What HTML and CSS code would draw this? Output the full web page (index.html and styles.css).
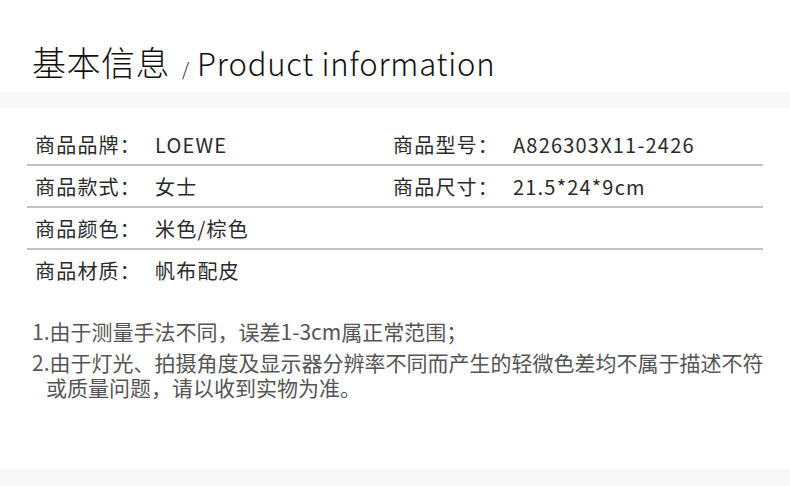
FILE: index.html
```html
<!DOCTYPE html>
<html lang="zh-CN">
<head>
<meta charset="utf-8">
<title>基本信息 / Product information</title>
<link rel="stylesheet" href="styles.css">
</head>
<body>
<header class="head">
  <h1 class="title"><span class="title-cn">基本信息</span><span class="title-slash">/</span><span class="title-en">Product information</span></h1>
</header>
<div class="band"></div>
<section class="table">
  <div class="row">
    <span class="label">商品品牌：</span><span class="value">LOEWE</span>
    <span class="label">商品型号：</span><span class="value">A826303X11-2426</span>
  </div>
  <div class="row">
    <span class="label">商品款式：</span><span class="value">女士</span>
    <span class="label">商品尺寸：</span><span class="value">21.5*24*9cm</span>
  </div>
  <div class="row">
    <span class="label">商品颜色：</span><span class="value">米色/棕色</span>
    <span class="label"></span><span class="value"></span>
  </div>
  <div class="row row-last">
    <span class="label">商品材质：</span><span class="value">帆布配皮</span>
    <span class="label"></span><span class="value"></span>
  </div>
</section>
<section class="notes">
  <p class="note">1.由于测量手法不同，误差1-3cm属正常范围；</p>
  <p class="note">2.由于灯光、拍摄角度及显示器分辨率不同而产生的轻微色差均不属于描述不符或质量问题，请以收到实物为准。</p>
</section>
<div class="band band-bottom"></div>
</body>
</html>
```
FILE: styles.css
```css
html, body {
  margin: 0;
  padding: 0;
  background: #ffffff;
}
body {
  width: 790px;
  height: 486px;
  overflow: hidden;
  font-family: "Noto Sans CJK SC", "Noto Sans", sans-serif;
  color: #333333;
  display: flex;
  flex-direction: column;
}
.head {
  height: 92px;
  display: flex;
  align-items: center;
  padding-left: 32px;
  box-sizing: border-box;
}
.title {
  margin: 0;
  font-weight: 300;
  display: flex;
  align-items: baseline;
  color: #111111;
  padding-top: 30px;
}
.title-cn {
  font-size: 34px;
  letter-spacing: 0.5px;
}
.title-slash {
  font-size: 18px;
  margin: 0 8px 0 12px;
}
.title-en {
  font-size: 31px;
  font-weight: 300;
  letter-spacing: 0.8px;
}
.band {
  height: 16px;
  background: #f8f8f8;
  flex: none;
}
.table {
  margin: 16px 27px 0 27px;
}
.row {
  display: grid;
  grid-template-columns: 120px 238px 120px 1fr;
  height: 40px;
  align-items: center;
  padding-left: 8px;
  border-bottom: 2px solid #c2c2c2;
  font-size: 20px;
  letter-spacing: 1.2px;
  color: #2a2a2a;
}
.row-last {
  border-bottom: none;
}
.notes {
  margin: 29px 0 0 32px;
  width: 740px;
  font-size: 21px;
  line-height: 25px;
  color: #555555;
}
.note {
  margin: 0 0 6px 0;
  padding-left: 14px;
  text-indent: -14px;
}
.band-bottom {
  margin-top: auto;
  height: 17px;
}
```
